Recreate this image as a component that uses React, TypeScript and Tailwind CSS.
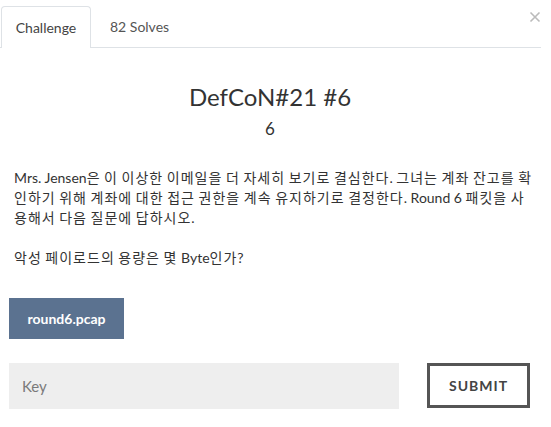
import React from "react";

function K({ text }: { text: string }) {
  const parts = text.split(/([\uAC00-\uD7A3]+)/);
  return (
    <>
      {parts.map((p, i) =>
        /[\uAC00-\uD7A3]/.test(p) ? (
          <span key={i} className="tracking-[1px]">
            {p}
          </span>
        ) : (
          <span key={i}>{p}</span>
        )
      )}
    </>
  );
}

export default function App() {
  return (
    <div className="relative w-[551px] h-[427px] bg-white text-[#333] font-['Lato','Noto_Sans_CJK_KR',sans-serif] overflow-hidden">
      <button className="absolute left-[529px] top-[11px] w-[12px] h-[12px] text-[#bbb]" aria-label="close">
        <svg viewBox="0 0 12 12" width="12" height="12">
          <path d="M1.5 1.5 L10.5 10.5 M10.5 1.5 L1.5 10.5" stroke="currentColor" strokeWidth="1.6" />
        </svg>
      </button>

      <div className="flex w-[541px] pt-[6px] border-b border-[#dee2e6] text-[14px]">
        <div className="ml-[1px] -mb-px w-[90px] h-[42px] flex items-center justify-center bg-white border border-b-0 border-[#dee2e6] rounded-t-[4px] text-[#444]">
          Challenge
        </div>
        <div className="h-[41px] flex items-center pl-[19px] text-[#555]">82 Solves</div>
      </div>

      <div className="w-[540px] mt-[34px]">
        <h1 className="text-center text-[24px] leading-[29px] text-[#333]">DefCoN#21 #6</h1>
        <div className="mt-[8px] text-center text-[17px] leading-[20px] text-[#333]">6</div>
      </div>

      <div className="mt-[29px] ml-[14px] w-[525px] text-[14px] leading-[20px] text-[#333] whitespace-nowrap">
        <p>
          <K text="Mrs. Jensen은 이 이상한 이메일을 더 자세히 보기로 결심한다. 그녀는 계좌 잔고를 확" />
          <br />
          <K text="인하기 위해 계좌에 대한 접근 권한을 계속 유지하기로 결정한다. Round 6 패킷을 사" />
          <br />
          <K text="용해서 다음 질문에 답하시오." />
        </p>
        <p className="mt-[20px]">
          <K text="악성 페이로드의 용량은 몇 Byte인가?" />
        </p>
      </div>

      <div className="mt-[30px] ml-[9px]">
        <button className="w-[115px] h-[41px] bg-[#5b7290] text-white font-bold text-[14px]">round6.pcap</button>
      </div>

      <div className="mt-[24px] ml-[9px] flex items-start">
        <div className="w-[390px] h-[46px] bg-[#eeeeee] flex items-center pl-[13px] text-[15px] text-[#7a7a7a]">
          Key
        </div>
        <button className="ml-[28px] w-[103px] h-[45px] border-[3px] border-[#555] bg-white text-[#444] font-bold text-[14px] tracking-[1px]">
          SUBMIT
        </button>
      </div>
    </div>
  );
}
